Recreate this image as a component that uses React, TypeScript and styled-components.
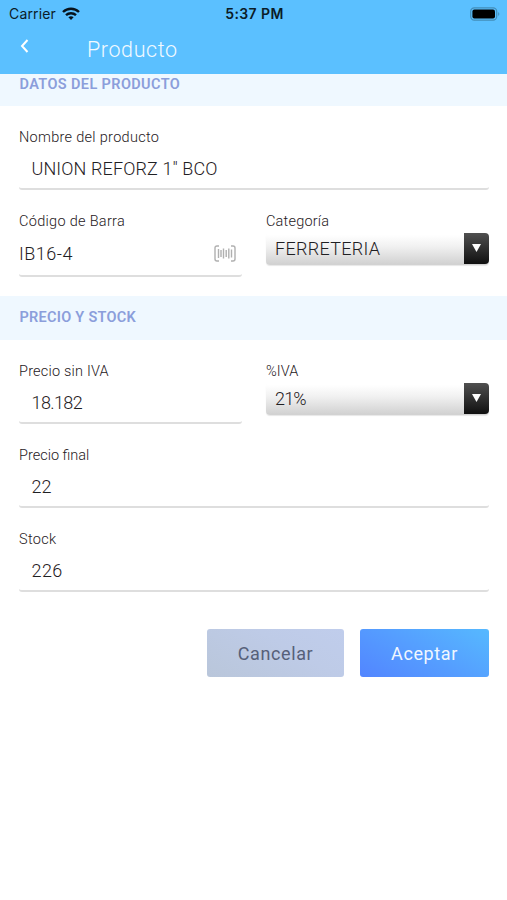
import React from "react";
import styled, { createGlobalStyle } from "styled-components";

const GlobalStyle = createGlobalStyle`
  * { box-sizing: border-box; }
  body { margin: 0; background: #fff; font-family: Roboto, "Liberation Sans", sans-serif; color: #1f2023; }
`;

const Screen = styled.div`
  width: 100%;
  max-width: 507px;
  min-height: 900px;
  background: #fff;
`;

const Header = styled.header`
  height: 74px;
  background: #5bc0ff;
`;

const StatusBar = styled.div`
  display: grid;
  grid-template-columns: 1fr auto 1fr;
  align-items: center;
  height: 27px;
  padding: 0 7px 0 9px;
  font-family: Inter, "Liberation Sans", sans-serif;
  color: #0b1c28;
`;

const Carrier = styled.div`
  display: flex;
  align-items: center;
  gap: 6px;
  font-size: 14px;
  letter-spacing: 0.15px;
`;

const Clock = styled.div`
  font-size: 14px;
  font-weight: 600;
  letter-spacing: 0.4px;
`;

const Battery = styled.svg`
  justify-self: end;
`;

const NavBar = styled.div`
  display: flex;
  height: 46px;
  padding-left: 20px;
`;

const BackButton = styled.button`
  display: flex;
  width: 67px;
  padding: 12px 0 0;
  border: 0;
  background: none;
`;

const Title = styled.h1`
  margin: 0;
  font-size: 21.5px;
  font-weight: 300;
  line-height: 46px;
  letter-spacing: 0.6px;
  color: #f2faff;
`;

const SectionHeading = styled.h2<{ $clipped?: boolean }>`
  margin: 0;
  height: ${(p) => (p.$clipped ? 32 : 44)}px;
  padding-left: 19.5px;
  background: #eff8ff;
  color: #8b9edb;
  font-size: 14.5px;
  font-weight: 600;
  line-height: ${(p) => (p.$clipped ? 21 : 43)}px;
  letter-spacing: ${(p) => (p.$clipped ? 0.38 : 0.27)}px;
`;

const Fields = styled.div`
  display: grid;
  grid-template-columns: 223px 223px;
  column-gap: 24px;
  row-gap: 20px;
  padding: 20px 18px 0 19px;
  margin-bottom: 19px;
`;

const Field = styled.div<{ $wide?: boolean }>`
  grid-column: ${(p) => (p.$wide ? "1 / -1" : "auto")};
  display: flex;
  flex-direction: column;
`;

const Label = styled.label<{ $track: number }>`
  height: 21px;
  font-size: 14.5px;
  font-weight: 300;
  line-height: 23px;
  letter-spacing: ${(p) => p.$track}px;
  white-space: nowrap;
`;

const Value = styled.div<{ $flush?: boolean; $track: number }>`
  display: flex;
  align-items: center;
  justify-content: space-between;
  height: ${(p) => (p.$flush ? 46 : 43)}px;
  padding: 1px 6px 0 ${(p) => (p.$flush ? 0 : 12.5)}px;
  border-bottom: 2.5px solid #dedede;
  border-radius: 3px;
  font-size: 18px;
  font-weight: 300;
  letter-spacing: ${(p) => p.$track}px;
  white-space: nowrap;
`;

const Select = styled.div<{ $track: number }>`
  display: flex;
  justify-content: space-between;
  height: 32px;
  margin-top: 2px;
  border-radius: 4px;
  background: linear-gradient(#fff 6%, #f1f1f1 42%, #d2d2d2 96%);
  font-size: 18px;
  font-weight: 300;
  line-height: 32px;
  letter-spacing: ${(p) => p.$track}px;
  padding-left: 9px;
  box-shadow: 0 1px 1px #e7e7e7;
`;

const Arrow = styled.span`
  display: flex;
  align-items: center;
  justify-content: center;
  width: 25px;
  height: 31px;
  padding-bottom: 2px;
  border-radius: 0 4px 4px 0;
  background: linear-gradient(#505050, #101010);
`;

const Actions = styled.div`
  display: flex;
  justify-content: flex-end;
  gap: 16px;
  padding: 18px 18px 0;
`;

const Button = styled.button<{ $primary?: boolean }>`
  width: ${(p) => (p.$primary ? 129 : 137)}px;
  height: 48px;
  padding: 0;
  border: 0;
  border-radius: 3px;
  font: 400 18px Roboto, sans-serif;
  letter-spacing: 0.6px;
  color: ${(p) => (p.$primary ? "#f0f7ff" : "#566079")};
  background: ${(p) =>
    p.$primary
      ? "linear-gradient(30deg, #5285ff 0%, #559dff 48%, #56b9ff 100%)"
      : "linear-gradient(30deg, #b9c6da 0%, #becbe7 60%, #c0cdec 100%)"};
`;

const WifiIcon = () => (
  <svg width="18" height="14" viewBox="0 0 18 14" fill="none" stroke="#07131c" strokeWidth="2.4">
    <path d="M1 5 C5.5 .6 12.5 .6 17 5" />
    <path d="M4 8.2 C6.8 5.5 11.2 5.5 14 8.2" />
    <path d="M6.4 10.2 Q9 8.1 11.6 10.2 L9 13 Z" fill="#07131c" stroke="none" />
  </svg>
);

const BatteryIcon = () => (
  <Battery width="30" height="14" viewBox="0 0 30 14">
    <rect x=".7" y=".8" width="26" height="12.4" rx="3.6" fill="#5bc0ff" stroke="#438db9" strokeWidth="1.2" />
    <rect x="2.4" y="2.5" width="22.6" height="9" rx="2" fill="#000" />
    <path d="M28.2 5 Q30.5 7 28.2 9 Z" fill="#438db9" />
  </Battery>
);

const BarcodeIcon = () => (
  <svg width="22" height="17" viewBox="0 0 22 17" fill="none" stroke="#b0b0b0" strokeWidth="1.4">
    <path d="M5 1 H3 Q1 1 1 3 V14 Q1 16 3 16 H5 M17 1 H19 Q21 1 21 3 V14 Q21 16 19 16 H17" />
    <path d="M4.5 4 V13 M7 5 V12 M9.5 3.5 V13.5 M12.2 5 V12 M14.8 3.5 V13.5 M17.5 4.5 V12.5" />
  </svg>
);

const ArrowIcon = () => (
  <svg width="9" height="8" viewBox="0 0 9 8">
    <path d="M0 0 H9 L4.5 8 Z" fill="#fff" />
  </svg>
);

export default function App() {
  return (
    <Screen>
      <GlobalStyle />
      <Header>
        <StatusBar>
          <Carrier>
            Carrier
            <WifiIcon />
          </Carrier>
          <Clock>5:37 PM</Clock>
          <BatteryIcon />
        </StatusBar>
        <NavBar>
          <BackButton aria-label="Volver">
            <svg width="9" height="14" viewBox="0 0 9 14" fill="none" stroke="#fff" strokeWidth="2">
              <path d="M7.5 1 L2 7 L7.5 13" />
            </svg>
          </BackButton>
          <Title>Producto</Title>
        </NavBar>
      </Header>
      <SectionHeading $clipped>DATOS DEL PRODUCTO</SectionHeading>
      <Fields>
        <Field $wide>
          <Label $track={0.3}>Nombre del producto</Label>
          <Value $track={0.12}>UNION REFORZ 1" BCO</Value>
        </Field>
        <Field>
          <Label $track={0.3}>Código de Barra</Label>
          <Value $flush $track={0.5}>
            IB16-4
            <BarcodeIcon />
          </Value>
        </Field>
        <Field>
          <Label $track={0.2}>Categoría</Label>
          <Select $track={0.3}>
            FERRETERIA
            <Arrow><ArrowIcon /></Arrow>
          </Select>
        </Field>
      </Fields>
      <SectionHeading>PRECIO Y STOCK</SectionHeading>
      <Fields>
        <Field>
          <Label $track={0.2}>Precio sin IVA</Label>
          <Value $track={-0.6}>18.182</Value>
        </Field>
        <Field>
          <Label $track={0.1}>%IVA</Label>
          <Select $track={-0.8}>
            21%
            <Arrow><ArrowIcon /></Arrow>
          </Select>
        </Field>
        <Field $wide>
          <Label $track={0}>Precio final</Label>
          <Value $track={0.1}>22</Value>
        </Field>
        <Field $wide>
          <Label $track={0.3}>Stock</Label>
          <Value $track={0.4}>226</Value>
        </Field>
      </Fields>
      <Actions>
        <Button>Cancelar</Button>
        <Button $primary>Aceptar</Button>
      </Actions>
    </Screen>
  );
}
